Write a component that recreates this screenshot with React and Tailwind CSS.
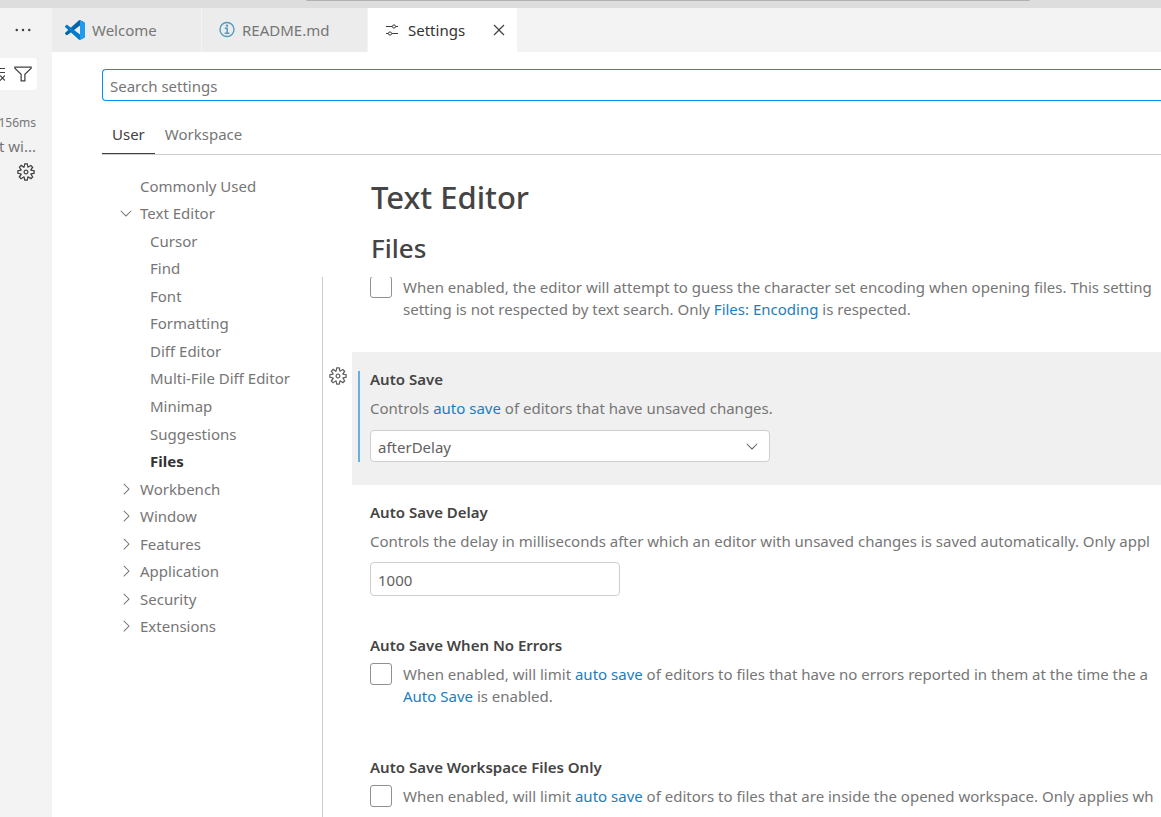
import {
  VscChevronDown,
  VscChevronRight,
  VscClose,
  VscEllipsis,
  VscFilter,
  VscGear,
} from "react-icons/vsc";

const toc = [
  { label: "Commonly Used", level: 0 },
  { label: "Text Editor", level: 0, icon: "down" },
  { label: "Cursor", level: 1 },
  { label: "Find", level: 1 },
  { label: "Font", level: 1 },
  { label: "Formatting", level: 1 },
  { label: "Diff Editor", level: 1 },
  { label: "Multi-File Diff Editor", level: 1 },
  { label: "Minimap", level: 1 },
  { label: "Suggestions", level: 1 },
  { label: "Files", level: 1, active: true },
  { label: "Workbench", level: 0, icon: "right" },
  { label: "Window", level: 0, icon: "right" },
  { label: "Features", level: 0, icon: "right" },
  { label: "Application", level: 0, icon: "right" },
  { label: "Security", level: 0, icon: "right" },
  { label: "Extensions", level: 0, icon: "right" },
];

function CodeLogo() {
  return (
    <svg viewBox="0 0 100 100" className="size-5 shrink-0" aria-hidden="true">
      <path fill="#0065a9" d="M96.5 10.8 75.9.9a6.2 6.2 0 0 0-7.1 1.2L1.3 63.6a4.2 4.2 0 0 0 0 6.1l5.5 5c1.5 1.4 3.7 1.5 5.3.3L93.3 13.4c2.7-2.1 6.7-.1 6.7 3.3v-.2c0-2.4-1.4-4.6-3.5-5.7z" />
      <path fill="#007acc" d="m96.5 89.2-20.6 9.9a6.2 6.2 0 0 1-7.1-1.2L1.3 36.4a4.2 4.2 0 0 1 0-6.1l5.5-5c1.5-1.4 3.7-1.5 5.3-.3l81.2 61.6c2.7 2.1 6.7.1 6.7-3.3v.2c0 2.4-1.4 4.6-3.5 5.7z" />
      <path fill="#1f9cf0" d="M75.9 99.1a6.2 6.2 0 0 1-7.1-1.2c2.3 2.3 6.2.7 6.2-2.6V4.7c0-3.3-3.9-4.9-6.2-2.6a6.2 6.2 0 0 1 7.1-1.2l20.6 9.9c2.2 1 3.5 3.2 3.5 5.6v67.2c0 2.4-1.4 4.6-3.5 5.6z" />
    </svg>
  );
}

function InfoIcon() {
  return (
    <svg viewBox="0 0 18 18" className="size-[18px] shrink-0" fill="none" stroke="#519aba" aria-hidden="true">
      <circle cx="9" cy="8.500" r="7" strokeWidth="1.400" />
      <path d="M6.800 7.300h2.400v5M6.600 12.300h4.800" strokeWidth="1.500" />
      <circle cx="9" cy="4.600" r="1.200" fill="#519aba" stroke="none" />
    </svg>
  );
}

function SlidersIcon() {
  return (
    <svg viewBox="0 0 16 16" className="size-4 shrink-0" fill="none" stroke="#3b3b3b" aria-hidden="true">
      <path d="M2 4.500h6M12 4.500h2M2 11.500h2M8 11.500h6" strokeWidth="1.200" />
      <circle cx="10" cy="4.500" r="1.600" />
      <circle cx="6" cy="11.500" r="1.600" />
    </svg>
  );
}

function ClearIcon() {
  return (
    <svg viewBox="0 0 20 20" className="size-5 shrink-0" fill="none" stroke="#424242" strokeWidth="1.200" aria-hidden="true">
      <path d="M5 4.500h15M5 8.500h15M5 12.500h7M15 11.500l5 5M20 11.500l-5 5" />
    </svg>
  );
}

function Link({ children }) {
  return (
    <a href="#setting" className="text-[#1a7ebf] hover:underline">
      {children}
    </a>
  );
}

function Setting({ title, id, selected = false, children }) {
  return (
    <section className="flex">
      <div className="w-[29px] shrink-0 pt-[14px]">
        {selected && (
          <button type="button" aria-label="More actions" className="ml-[5px] block text-[#616161]">
            <VscGear className="size-5" />
          </button>
        )}
      </div>
      <div className={selected ? "min-w-0 flex-1 bg-[#f0f0f0] px-[18px] pt-[19px] pb-[23px]" : "min-w-0 flex-1 px-[18px] pt-[19px] pb-[22px]"}>
        <div className={selected ? "-mx-3 border-l-2 border-[#66afe0] px-2.5" : ""}>
          <label htmlFor={id} className="block leading-4 font-semibold text-[#444444]">
            {title}
          </label>
          <div className="pt-2.5">{children}</div>
        </div>
      </div>
    </section>
  );
}

function Check({ id, label, children }) {
  return (
    <div className="flex gap-[11px] pb-[11px]">
      <input
        id={id}
        type="checkbox"
        aria-label={label}
        className="size-[22px] shrink-0 appearance-none rounded-[3px] border border-[#919191] bg-white"
      />
      <p>{children}</p>
    </div>
  );
}

export default function App() {
  return (
    <div className="flex h-screen flex-col overflow-hidden bg-white font-['Noto_Sans',sans-serif] text-[15px] leading-[22px] whitespace-nowrap text-[#767676]">
      <header className="flex h-2 shrink-0 bg-[#dddddd] pr-[131px] pl-[306px]">
        <div className="h-px flex-1 rounded-b bg-[#b0b0b0]" />
      </header>
      <div className="flex min-h-0 flex-1">
        <aside className="flex w-[52px] shrink-0 flex-col overflow-hidden bg-[#f3f3f3]">
          <div className="flex h-11 items-center justify-end pr-[19px]">
            <button type="button" aria-label="Views and more actions" className="text-[#424242]">
              <VscEllipsis className="size-5" />
            </button>
          </div>
          <div className="mt-1.5 mr-[15px] flex h-8 items-center justify-end gap-2 rounded-r bg-white pr-1">
            <button type="button" aria-label="Clear"><ClearIcon /></button>
            <button type="button" aria-label="Filter" className="text-[#424242]">
              <VscFilter className="size-5" />
            </button>
          </div>
          <div className="mt-[22px] flex justify-end pr-4 text-[12px]">156ms</div>
          <div className="mt-px flex justify-end pr-4">t wi...</div>
          <div className="mt-[5px] flex justify-end pr-4">
            <button type="button" aria-label="Manage" className="text-[#424242]">
              <VscGear className="size-5" />
            </button>
          </div>
        </aside>

        <main className="flex min-w-0 flex-1 flex-col">
          <div role="tablist" className="flex h-11 shrink-0 bg-[#f3f3f3]">
            <button type="button" role="tab" className="flex w-[150px] items-center gap-[7px] border-r border-[#f3f3f3] bg-[#ececec] pl-[13px]">
              <CodeLogo />
              Welcome
            </button>
            <button type="button" role="tab" className="flex w-[166px] items-center gap-1.5 border-r border-[#f3f3f3] bg-[#ececec] pl-4">
              <InfoIcon />
              README.md
            </button>
            <div className="flex w-[149px] items-center bg-white pr-2 pl-4">
              <button type="button" role="tab" aria-selected="true" className="flex flex-1 items-center gap-2 text-[#333333]">
                <SlidersIcon />
                Settings
              </button>
              <button type="button" aria-label="Close" className="text-[#424242]">
                <VscClose className="size-5" />
              </button>
            </div>
          </div>

          <div className="flex shrink-0 flex-col pt-[17px] pl-[50px]">
            <input
              type="text"
              aria-label="Search settings"
              placeholder="Search settings"
              className="h-8 w-full rounded-l-sm border border-r-0 border-[#0090f1] bg-white px-[7px] pt-0.5 outline-none placeholder:text-[#767676]"
            />
            <div className="mt-[13px] flex h-[41px] border-b border-[#cccccc]">
              <button type="button" className="h-10 border-b border-[#424242] px-2.5 text-[#424242]">User</button>
              <button type="button" className="h-10 px-2.5">Workspace</button>
            </div>
          </div>

          <div className="flex min-h-0 flex-1">
            <nav className="w-[270px] shrink-0 pt-[17px] pl-[65px]">
              <ul className="grid h-[468px] auto-rows-fr">
                {toc.map((item) => (
                  <li key={item.label} className="flex items-center">
                    <span className="w-[23px] shrink-0">
                      {item.icon === "down" && <VscChevronDown className="size-[18px]" />}
                      {item.icon === "right" && <VscChevronRight className="size-[18px]" />}
                    </span>
                    <a
                      href="#section"
                      className={
                        item.active
                          ? "pl-2.5 font-bold text-[#333333]"
                          : item.level
                            ? "pl-2.5"
                            : ""
                      }
                    >
                      {item.label}
                    </a>
                  </li>
                ))}
              </ul>
            </nav>

            <div className="flex min-w-0 flex-1 flex-col">
              <div className="h-[122px] shrink-0 pt-[22px] pl-[49px] font-medium text-[#444444]">
                <h1 className="text-[31px] leading-10">Text Editor</h1>
                <h2 className="mt-[15px] text-[26px] leading-8">Files</h2>
              </div>
              <div className="min-h-0 flex-1 overflow-hidden border-l border-[#cccccc]">
                <div className="-mt-px pb-[21px] pl-[47px]">
                  <Check id="guess" label="Auto Guess Encoding">
                    When enabled, the editor will attempt to guess the character set encoding when opening files. This setting
                    <br />
                    setting is not respected by text search. Only <Link>Files: Encoding</Link> is respected.
                  </Check>
                </div>

                <Setting title="Auto Save" id="autosave" selected>
                  <p>
                    Controls <Link>auto save</Link> of editors that have unsaved changes.
                  </p>
                  <div className="mt-[11px] grid w-[400px] items-center">
                    <select
                      id="autosave"
                      className="col-start-1 row-start-1 h-8 appearance-none rounded-sm border border-[#cecece] bg-white px-[7px] pt-0.5 text-[#616161]"
                    >
                      <option>afterDelay</option>
                    </select>
                    <VscChevronDown className="pointer-events-none col-start-1 row-start-1 mr-[9px] size-[18px] justify-self-end text-[#616161]" />
                  </div>
                </Setting>

                <Setting title="Auto Save Delay" id="delay">
                  <p>
                    Controls the delay in milliseconds after which an editor with unsaved changes is saved automatically. Only appl
                  </p>
                  <input
                    id="delay"
                    type="text"
                    defaultValue="1000"
                    className="mt-2.5 block h-[34px] w-[250px] rounded-sm border border-[#cecece] bg-white px-[7px] pt-0.5 text-[#616161]"
                  />
                </Setting>

                <Setting title="Auto Save When No Errors" id="noerrors">
                  <Check id="noerrors">
                    When enabled, will limit <Link>auto save</Link> of editors to files that have no errors reported in them at the time the a
                    <br />
                    <Link>Auto Save</Link> is enabled.
                  </Check>
                </Setting>

                <Setting title="Auto Save Workspace Files Only" id="wsfiles">
                  <Check id="wsfiles">
                    When enabled, will limit <Link>auto save</Link> of editors to files that are inside the opened workspace. Only applies wh
                  </Check>
                </Setting>
              </div>
            </div>
          </div>
        </main>
      </div>
    </div>
  );
}
